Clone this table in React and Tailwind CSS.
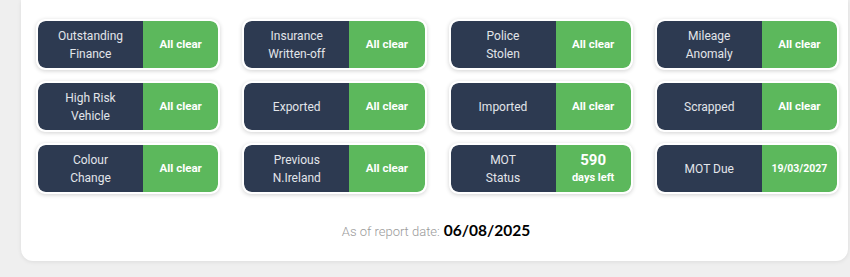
import React from 'react';

const checks = [
    { label: ['Outstanding', 'Finance'], value: 'All clear' },
    { label: ['Insurance', 'Written-off'], value: 'All clear' },
    { label: ['Police', 'Stolen'], value: 'All clear' },
    { label: ['Mileage', 'Anomaly'], value: 'All clear' },
    { label: ['High Risk', 'Vehicle'], value: 'All clear' },
    { label: ['Exported'], value: 'All clear' },
    { label: ['Imported'], value: 'All clear' },
    { label: ['Scrapped'], value: 'All clear' },
    { label: ['Colour', 'Change'], value: 'All clear' },
    { label: ['Previous', 'N.Ireland'], value: 'All clear' },
    { label: ['MOT', 'Status'], days: 590 },
    { label: ['MOT Due'], value: '19/03/2027', small: true },
];

function CheckTile({ item }) {
    return (
        <div className="flex h-[51px] rounded-[9px] border-2 border-white bg-white shadow-[0_1px_4px_rgba(0,0,0,0.18)] overflow-hidden">
            <div className="flex w-[105px] flex-col items-center justify-center rounded-l-[8px] bg-[#2d3a51] text-[12px] leading-[18px] text-[#e2e5ea]">
                {item.label.map(l => <span key={l}>{l}</span>)}
            </div>
            <div className="flex flex-1 flex-col items-center justify-center rounded-r-[8px] bg-[#5cb85c] font-bold text-white">
                {item.days ? (
                    <>
                        <span className="text-[15px] leading-[19px]">{item.days}</span>
                        <span className="text-[11px] leading-[16px]">days left</span>
                    </>
                ) : (
                    <span className={item.small ? 'text-[10.5px]' : 'text-[11.5px]'}>{item.value}</span>
                )}
            </div>
        </div>
    );
}

export default function App() {
    return (
        <div className="min-h-[277px] bg-[#efefef] font-['Roboto',sans-serif]">
            <div className="ml-[21px] w-[827px] rounded-b-[12px] bg-white pt-[19px] pb-[19px] pl-[15px] shadow-[0_1px_4px_rgba(0,0,0,0.08)]">
                <div className="grid w-[803px] grid-cols-4 gap-x-[22px] gap-y-[11px]">
                    {checks.map((c, i) => <CheckTile key={i} item={c} />)}
                </div>
                <div className="mt-[25px] flex items-baseline justify-center pr-[12px]">
                    <span className="text-[13px] font-light text-[#9a9a9a]">As of report date:</span>
                    <span className="ml-[4px] font-['Lato',sans-serif] text-[15.5px] font-bold text-black">06/08/2025</span>
                </div>
            </div>
        </div>
    );
}
